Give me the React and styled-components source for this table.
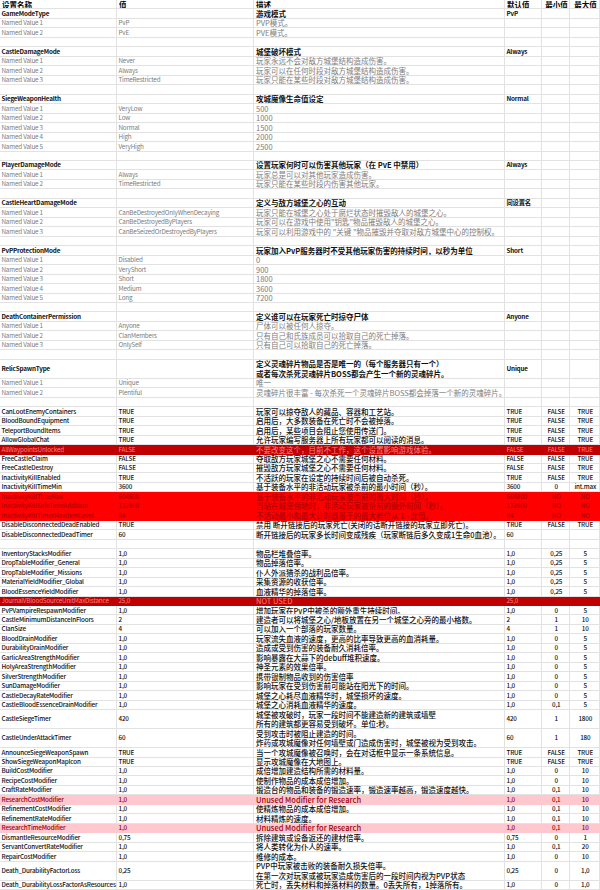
import React from 'react'
import styled, { createGlobalStyle } from 'styled-components'

const ROW_H = 9.47
const COLS = '117px 137px 251px 37px 28px 30px'

const TONES = {
  header: { bg: '#fff', fg: '#000', weight: 700, line: '#e2e2e2' },
  group: { bg: '#fff', fg: '#111', weight: 700, line: '#e2e2e2' },
  option: { bg: '#fff', fg: '#7c7c7c', weight: 400, line: '#e2e2e2' },
  plain: { bg: '#fff', fg: '#111', weight: 500, line: '#e2e2e2' },
  darkRed: { bg: '#c00000', fg: '#ff8080', weight: 400, line: '#c00000' },
  red: { bg: '#ff0000', fg: '#b00000', weight: 500, line: '#ff0000' },
  pink: { bg: '#ffc7ce', fg: '#9c0006', weight: 500, line: '#ffc7ce' },
}

const GlobalStyle = createGlobalStyle`
  html, body {
    margin: 0;
    padding: 0;
    background: #fff;
  }
  body {
    overflow: hidden;
    font-family: "Noto Sans CJK SC", "Liberation Sans", sans-serif;
  }
`

const Sheet = styled.div`
  width: 600px;
  height: 890px;
  overflow: hidden;
  display: flex;
  flex-direction: column;
`

const Row = styled.div`
  flex: none;
  display: grid;
  grid-template-columns: ${COLS};
  height: ${p => p.$span * ROW_H}px;
  background: ${p => TONES[p.$tone].bg};
  color: ${p => TONES[p.$tone].fg};
  font-weight: ${p => TONES[p.$tone].weight};
`

const Cell = styled.div`
  box-sizing: border-box;
  display: flex;
  flex-direction: column;
  justify-content: center;
  align-items: ${p => (p.$center ? 'center' : 'flex-start')};
  padding: 0 0 0 ${p => (p.$wide ? 2 : 1.5)}px;
  border-right: 1px solid ${p => TONES[p.$tone].line};
  border-bottom: 1px solid ${p => TONES[p.$tone].line};
  font-size: ${p => (p.$wide ? 7.5 : 6.3)}px;
  letter-spacing: ${p => (p.$wide ? 0 : -0.18)}px;
  line-height: ${ROW_H}px;
  white-space: nowrap;
  overflow: hidden;
`

const GROUPS = [
  {
    name: 'GameModeType', desc: ['游戏模式'], def: 'PvP',
    options: [['PvP', 'PVP模式。'], ['PvE', 'PVE模式。']],
  },
  {
    name: 'CastleDamageMode', desc: ['城堡破坏模式'], def: 'Always',
    options: [
      ['Never', '玩家永远不会对敌方城堡结构造成伤害。'],
      ['Always', '玩家可以在任何时段对敌方城堡结构造成伤害。'],
      ['TimeRestricted', '玩家只能在某些时段对敌方城堡结构造成伤害。'],
    ],
  },
  {
    name: 'SiegeWeaponHealth', desc: ['攻城魔像生命值设定'], def: 'Normal',
    options: [['VeryLow', '500'], ['Low', '1000'], ['Normal', '1500'], ['High', '2000'], ['VeryHigh', '2500']],
  },
  {
    name: 'PlayerDamageMode', desc: ['设置玩家何时可以伤害其他玩家（在 PvE 中禁用）'], def: 'Always',
    options: [
      ['Always', '玩家总是可以对其他玩家造成伤害。'],
      ['TimeRestricted', '玩家只能在某些时段内伤害其他玩家。'],
    ],
  },
  {
    name: 'CastleHeartDamageMode', desc: ['定义与敌方城堡之心的互动'], def: '同设置名',
    options: [
      ['CanBeDestroyedOnlyWhenDecaying', '玩家只能在城堡之心处于腐烂状态时摧毁敌人的城堡之心。'],
      ['CanBeDestroyedByPlayers', '玩家可以在游戏中使用"钥匙"物品摧毁敌人的城堡之心。'],
      ['CanBeSeizedOrDestroyedByPlayers', '玩家可以利用游戏中的 "关键 "物品摧毁并夺取对敌方城堡中心的控制权。'],
    ],
  },
  {
    name: 'PvPProtectionMode', desc: ['玩家加入PvP服务器时不受其他玩家伤害的持续时间，以秒为单位'], def: 'Short',
    options: [['Disabled', '0'], ['VeryShort', '900'], ['Short', '1800'], ['Medium', '3600'], ['Long', '7200']],
  },
  {
    name: 'DeathContainerPermission', desc: ['定义谁可以在玩家死亡时掠夺尸体'], def: 'Anyone',
    options: [
      ['Anyone', '尸体可以被任何人掠夺。'],
      ['ClanMembers', '只有自己和氏族成员可以拾取自己的死亡掉落。'],
      ['OnlySelf', '只有自己可以拾取自己的死亡掉落。'],
    ],
  },
  {
    name: 'RelicSpawnType',
    desc: ['定义灵魂碎片物品是否是唯一的（每个服务器只有一个）', '或者每次杀死灵魂碎片BOSS都会产生一个新的灵魂碎片。'],
    def: 'Unique',
    options: [
      ['Unique', '唯一'],
      ['Plentiful', '灵魂碎片很丰富 - 每次杀死一个灵魂碎片BOSS都会掉落一个新的灵魂碎片。'],
    ],
  },
]

const T = ['TRUE', 'FALSE', 'TRUE']

// [name, value, description lines, default, min, max, tone]
const SETTINGS = [
  ['CanLootEnemyContainers', 'TRUE', ['玩家可以掠夺敌人的藏品、容器和工艺站。'], ...T],
  ['BloodBoundEquipment', 'TRUE', ['启用后，大多数装备在死亡时不会被掉落。'], ...T],
  ['TeleportBoundItems', 'TRUE', ['启用后，某些项目会阻止您使用传送门。'], ...T],
  ['AllowGlobalChat', 'TRUE', ['允许玩家编写服务器上所有玩家都可以阅读的消息。'], ...T],
  ['AllWaypointsUnlocked', 'FALSE', ['不要改变这个，目前不工作，这个设置影响游戏体验。'], 'FALSE', 'FALSE', 'TRUE', 'darkRed'],
  ['FreeCastleClaim', 'FALSE', ['夺取敌方玩家城堡之心不需要任何材料。'], 'FALSE', 'FALSE', 'TRUE'],
  ['FreeCastleDestroy', 'FALSE', ['摧毁敌方玩家城堡之心不需要任何材料。'], 'FALSE', 'FALSE', 'TRUE'],
  ['InactivityKillEnabled', 'TRUE', ['不活跃的玩家在设定的持续时间后被自动杀死。'], ...T],
  ['InactivityKillTimeMin', '3600', ['基于装备水平的非活动玩家被杀前的最小时间（秒）。'], '3600', '0', 'int.max'],
  ['InactivityKillTimeMax', '604800', ['基于装备水平的非活动玩家被杀前的最大时间（秒）。'], '604800', 'NO', 'NO', 'red'],
  ['InactivityKillSafeTimeAddition', '172800', ['当站在城堡领地时，非活动玩家被杀前的额外时间（秒）。'], '172800', 'NO', 'NO', 'red'],
  ['InactivityKillTimerMaxItemLevel', '84', ['不活动最小和最大计时器基于的最大档位从 1 - 此值。'], '84', 'NO', 'NO', 'red'],
  ['DisableDisconnectedDeadEnabled', 'TRUE', ['禁用 断开链接后的玩家死亡(关闭的话断开链接的玩家立即死亡)。'], ...T],
  ['DisableDisconnectedDeadTimer', '60', ['断开链接后的玩家多长时间变成残疾（玩家断链后多久变成1生命0血池）。'], '60', '', ''],
  null,
  ['InventoryStacksModifier', '1,0', ['物品栏堆叠倍率。'], '1,0', '0,25', '5'],
  ['DropTableModifier_General', '1,0', ['物品掉落倍率。'], '1,0', '0,25', '5'],
  ['DropTableModifier_Missions', '1,0', ['仆人外派猎杀的战利品倍率。'], '1,0', '0,25', '5'],
  ['MaterialYieldModifier_Global', '1,0', ['采集资源的收获倍率。'], '1,0', '0,25', '5'],
  ['BloodEssenceYieldModifier', '1,0', ['血液精华的掉落倍率。'], '1,0', '0,25', '5'],
  ['JournalVBloodSourceUnitMaxDistance', '25,0', ['NOT USED'], '25,0', '', '', 'darkRed'],
  ['PvPVampireRespawnModifier', '1,0', ['增加玩家在PvP中被杀的额外重生持续时间。'], '1,0', '0', '5'],
  ['CastleMinimumDistanceInFloors', '2', ['建造者可以将城堡之心/地板放置在另一个城堡之心旁的最小格数。'], '2', '1', '10'],
  ['ClanSize', '4', ['可以加入一个部落的玩家数量。'], '4', '1', '10'],
  ['BloodDrainModifier', '1,0', ['玩家流失血液的速度，更高的比率导致更高的血消耗量。'], '1,0', '0', '5'],
  ['DurabilityDrainModifier', '1,0', ['造成或受到伤害的装备耐久消耗倍率。'], '1,0', '0', '5'],
  ['GarlicAreaStrengthModifier', '1,0', ['影响暴露在大蒜下的debuff堆积速度。'], '1,0', '0', '5'],
  ['HolyAreaStrengthModifier', '1,0', ['神圣元素的效果倍率。'], '1,0', '0', '5'],
  ['SilverStrengthModifier', '1,0', ['携带银制物品收到的伤害倍率'], '1,0', '0', '5'],
  ['SunDamageModifier', '1,0', ['影响玩家在受到伤害前可能站在阳光下的时间。'], '1,0', '0', '5'],
  ['CastleDecayRateModifier', '1,0', ['城堡之心耗尽血液精华时，城堡损坏的速度。'], '1,0', '0', '5'],
  ['CastleBloodEssenceDrainModifier', '1,0', ['城堡之心消耗血液精华的速度。'], '1,0', '0,1', '5'],
  ['CastleSiegeTimer', '420', ['城堡被攻破时，玩家一段时间不能建造新的建筑或墙壁', '所有的建筑都更容易受到破坏。单位:秒。'], '420', '1', '1800'],
  ['CastleUnderAttackTimer', '60', ['受到攻击时被阻止建造的时间。', '炸药或攻城魔像对任何墙壁或门造成伤害时，城堡被视为受到攻击。'], '60', '1', '180'],
  ['AnnounceSiegeWeaponSpawn', 'TRUE', ['当一个攻城魔像被召唤时，会在对话框中显示一条系统信息。'], ...T],
  ['ShowSiegeWeaponMapIcon', 'TRUE', ['显示攻城魔像在大地图上。'], ...T],
  ['BuildCostModifier', '1,0', ['成倍增加建造结构所需的材料量。'], '1,0', '0', '10'],
  ['RecipeCostModifier', '1,0', ['使制作物品的成本成倍增加。'], '1,0', '0', '10'],
  ['CraftRateModifier', '1,0', ['锻造台的物品和装备的锻造速率，锻造速率越高，锻造速度越快。'], '1,0', '0,1', '10'],
  ['ResearchCostModifier', '1,0', ['Unused Modifier for Research'], '1,0', '0,1', '10', 'pink'],
  ['RefinementCostModifier', '1,0', ['使精炼物品的成本成倍增加。'], '1,0', '0,1', '10'],
  ['RefinementRateModifier', '1,0', ['材料精炼的速度。'], '1,0', '0,1', '10'],
  ['ResearchTimeModifier', '1,0', ['Unused Modifier for Research'], '1,0', '0,1', '10', 'pink'],
  ['DismantleResourceModifier', '0,75', ['拆除建筑或设备返还的建材倍率。'], '0,75', '0', '1'],
  ['ServantConvertRateModifier', '1,0', ['将人类转化为仆人的速率。'], '1,0', '0,1', '20'],
  ['RepairCostModifier', '1,0', ['维修的成本。'], '1,0', '0', '10'],
  ['Death_DurabilityFactorLoss', '0,25', ['PVP中玩家被击败的装备耐久损失倍率。', '在第一次对玩家或被玩家造成伤害后的一段时间内视为PVP状态'], '0,25', '0', '1,0'],
  ['Death_DurabilityLossFactorAsResources', '1,0', ['死亡时，丢失材料和掉落材料的数量。0丢失所有，1掉落所有。'], '1,0', '0', '1,0'],
]

function SheetRow({ tone = 'plain', span = 1, cells }) {
  return (
    <Row $tone={tone} $span={span}>
      {cells.map((value, i) => (
        <Cell key={i} $tone={tone} $center={i >= 4} $wide={i === 2 || tone === 'header'}>
          {(Array.isArray(value) ? value : [value]).map((line, j) => (
            <span key={j}>{line}</span>
          ))}
        </Cell>
      ))}
    </Row>
  )
}

const blank = ['', '', '', '', '', '']

export default function App() {
  return (
    <Sheet>
      <GlobalStyle />
      <SheetRow tone='header' cells={['设置名称', '值', '描述', '默认值', '最小值', '最大值']} />

      {GROUPS.map(group => (
        <React.Fragment key={group.name}>
          <SheetRow
            tone='group'
            span={group.desc.length}
            cells={[group.name, '', group.desc, group.def, '', '']}
          />
          {group.options.map(([value, desc], i) => (
            <SheetRow
              key={value}
              tone='option'
              cells={[`Named Value ${i + 1}`, value, desc, '', '', '']}
            />
          ))}
          <SheetRow cells={blank} />
        </React.Fragment>
      ))}

      {SETTINGS.map((s, i) =>
        s === null
          ? <SheetRow key={i} cells={blank} />
          : <SheetRow
              key={s[0]}
              tone={s[6] || 'plain'}
              span={s[2].length}
              cells={[s[0], s[1], s[2], s[3], s[4], s[5]]}
            />
      )}
    </Sheet>
  )
}
